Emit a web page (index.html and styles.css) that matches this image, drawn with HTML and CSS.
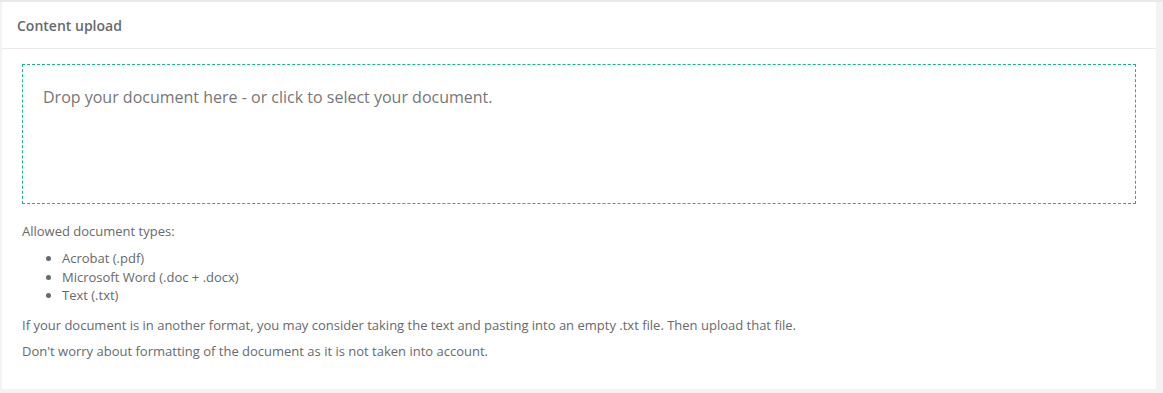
FILE: index.html
```html
<!DOCTYPE html>
<html lang="en">
<head>
    <meta charset="UTF-8">
    <meta name="viewport" content="width=device-width, initial-scale=1.0">
    <title>Content upload</title>
    <link rel="stylesheet" href="styles.css">
</head>
<body>

    <div class="ibox">
        <!-- Titre du bloc -->
        <div class="ibox-title">
            <h5>Content upload</h5>
        </div>

        <div class="ibox-content">
            <!-- Zone de dépôt -->
            <div class="dropzone">
                <div class="dz-message">Drop your document here - or click to select your document.</div>
            </div>

            <p class="types-title">Allowed document types:</p>
            <ul class="types-list">
                <li>Acrobat (.pdf)</li>
                <li>Microsoft Word (.doc + .docx)</li>
                <li>Text (.txt)</li>
            </ul>
            <p>If your document is in another format, you may consider taking the text and pasting into an empty .txt file. Then upload that file.</p>
            <p>Don't worry about formatting of the document as it is not taken into account.</p>
        </div>
    </div>

</body>
</html>
```

FILE: styles.css
```css
html {
    background: #f3f3f4;
}
body {
    margin: 0;
    padding: 0 7px 4px 2px;
    font-family: "Open Sans", Arial, sans-serif;
    font-size: 13px;
    color: #676a6c;
    border-top: 2px solid #e7eaec;
}
.ibox {
    background: #fff;
}
.ibox-title {
    height: 46px;
    padding: 0 15px;
    border-bottom: 1px solid #e7eaec;
    display: flex;
    align-items: center;
}
.ibox-title h5 {
    margin: 0;
    font-size: 14px;
    font-weight: 600;
    color: #676a6c;
}
.ibox-content {
    padding: 15px 20px 21px;
}
.dropzone {
    height: 138px;
    border: 1px dashed #1ab394;
    padding: 0 20px;
}
.dz-message {
    margin-top: 21px;
    font-size: 16px;
    color: #777;
}
p {
    margin: 0 0 7px;
    line-height: 19px;
}
.types-title {
    margin: 18px 0 8px;
}
.types-list {
    margin: 0 0 11px;
    padding-left: 40px;
    line-height: 18.5px;
}
```
